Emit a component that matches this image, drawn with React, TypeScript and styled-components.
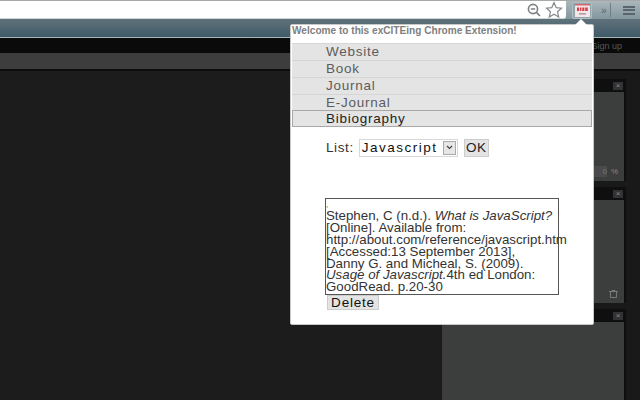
import React from "react";
import styled, { createGlobalStyle } from "styled-components";

const GlobalStyle = createGlobalStyle`
  html, body {
    margin: 0;
    padding: 0;
    background: #1c1c1c;
  }
`;

const tabs = ["Website", "Book", "Journal", "E-Journal", "Bibiography"];

const App = () => {
  return (
    <>
      <GlobalStyle />
      <Page>
        <TopBar>
          <AddressBar>
            <svg width="16" height="16" viewBox="0 0 16 16" fill="none" stroke="#7b8183" strokeWidth="1.6">
              <circle cx="7" cy="7" r="4.6" />
              <path d="M4.8 7h4.4M10.4 10.4l3.6 3.6" />
            </svg>
            <svg width="18" height="18" viewBox="0 0 18 18" fill="#fff" stroke="#858b8d" strokeWidth="1.2">
              <path d="M9 1.6l2.2 5 5.3.5-4 3.6 1.2 5.4L9 13.3l-4.7 2.8 1.2-5.4-4-3.6 5.3-.5z" />
            </svg>
          </AddressBar>
          <Tools>
            <ExtensionButton>
              <svg width="15" height="13" viewBox="0 0 15 13">
                <rect x="0" y="0" width="15" height="13" fill="#f4e6e8" />
                <rect x="0" y="0" width="15" height="1.5" fill="#d9646c" />
                <path d="M2 3.5h2.2v3.5H2zM5 3.5h1.4v3.5H5zM7.2 3.5h2.2v3.5H7.2zM10.2 3.5h2.6v3.5h-2.6z" fill="#d3414b" />
                <rect x="4" y="9" width="7" height="1.6" fill="#a9a0a2" />
              </svg>
            </ExtensionButton>
            <Chevron>»</Chevron>
            <Divider />
            <Burger>
              <span />
              <span />
              <span />
            </Burger>
          </Tools>
        </TopBar>
        <ThemeBar />
        <BlackBar>
          <SignUp>Sign up</SignUp>
        </BlackBar>
        <GreyBar />
        <Workspace>
          <SideColumn>
            <Panel $height={102}>
              <PanelHeader>
                <CloseBox>×</CloseBox>
              </PanelHeader>
              <PanelBody>
                <PanelFoot>
                  <SmallInput>0</SmallInput>
                  <Percent>%</Percent>
                </PanelFoot>
              </PanelBody>
            </Panel>
            <Panel $height={116}>
              <PanelHeader>
                <CloseBox>×</CloseBox>
              </PanelHeader>
              <PanelBody>
                <PanelFoot>
                  <svg width="9" height="8" viewBox="0 0 9 8" fill="none" stroke="#77797a">
                    <path d="M1.5 1.5h6v6h-6zM0 1.5h9M3 1.5V.5h3v1" />
                  </svg>
                </PanelFoot>
              </PanelBody>
            </Panel>
            <Panel $height={91}>
              <PanelHeader>
                <CloseBox>×</CloseBox>
              </PanelHeader>
              <PanelBody />
            </Panel>
          </SideColumn>
        </Workspace>

        <Popup>
          <Notch />
          <Welcome>Welcome to this exCITEing Chrome Extension!</Welcome>
          <TabList>
            {tabs.map((tab) => (
              <Tab key={tab} $active={tab === "Bibiography"}>
                {tab}
              </Tab>
            ))}
          </TabList>
          <TabContent>
            <ListRow>
              <span>List:</span>
              <SelectBox>
                Javascript
                <SelectArrow>
                  <svg width="7" height="5" viewBox="0 0 7 5" fill="none" stroke="#444" strokeWidth="1.2">
                    <path d="M1 1l2.5 2.5L6 1" />
                  </svg>
                </SelectArrow>
              </SelectBox>
              <PlainButton>OK</PlainButton>
            </ListRow>
            <Biblio>
              <Comma>,</Comma>
              <Line>
                Stephen, C (n.d.). <em>What is JavaScript?</em>
              </Line>
              <Line>[Online]. Available from:</Line>
              <Line>http://about.com/reference/javascript.htm</Line>
              <Line>[Accessed:13 September 2013],</Line>
              <Line>Danny G. and Micheal, S. (2009).</Line>
              <Line>
                <em>Usage of Javascript.</em>4th ed London:
              </Line>
              <Line>GoodRead. p.20-30</Line>
            </Biblio>
            <DeleteButton>Delete</DeleteButton>
          </TabContent>
        </Popup>
      </Page>
    </>
  );
};

export default App;

const Page = styled.div`
  position: relative;
  width: 640px;
  height: 400px;
  overflow: hidden;
  display: flex;
  flex-direction: column;
  background: #1c1c1c;
  font-family: "Liberation Sans", Arial, sans-serif;
`;

const TopBar = styled.div`
  display: flex;
  flex-shrink: 0;
  height: 19px;
  background: linear-gradient(#aab7bb, #82969e);
  border-top: 1px solid #a8a8a8;
  box-sizing: border-box;
`;

const AddressBar = styled.div`
  width: 566px;
  display: flex;
  align-items: center;
  justify-content: flex-end;
  gap: 3px;
  padding-right: 3px;
  box-sizing: border-box;
  background: #fff;
  border-bottom: 1px solid #cfd6d8;
  border-radius: 0 0 3px 0;
`;

const Tools = styled.div`
  flex: 1;
  display: flex;
  align-items: center;
  padding-left: 6px;
`;

const ExtensionButton = styled.div`
  width: 20px;
  height: 17px;
  display: flex;
  align-items: center;
  justify-content: center;
  background: #93a5ac;
  border: 1px solid #b2bfc3;
  box-sizing: border-box;
  border-radius: 2px;
`;

const Chevron = styled.span`
  margin-left: 9px;
  font-size: 10px;
  color: #59656a;
`;

const Divider = styled.div`
  width: 1px;
  height: 14px;
  margin-left: 3px;
  background: #6f7f85;
`;

const Burger = styled.div`
  margin-left: 12px;
  width: 12px;
  display: flex;
  flex-direction: column;
  gap: 1.5px;

  span {
    height: 2px;
    background: #59656a;
  }
`;

const ThemeBar = styled.div`
  flex-shrink: 0;
  height: 19px;
  box-sizing: border-box;
  background: linear-gradient(#5f727b, #3f5a68);
  border-bottom: 1px solid #a9b7bb;
`;

const BlackBar = styled.div`
  flex-shrink: 0;
  height: 15px;
  display: flex;
  justify-content: flex-end;
  align-items: center;
  padding-right: 18px;
  background: #0a0a0a;
`;

const SignUp = styled.span`
  font-size: 9px;
  color: #55595a;
`;

const GreyBar = styled.div`
  flex-shrink: 0;
  height: 18px;
  box-sizing: border-box;
  background: #3d3d3d;
  border-bottom: 2px solid #0c0c0c;
`;

const Workspace = styled.div`
  flex: 1;
  min-height: 0;
  display: flex;
  justify-content: flex-end;
  background: #1c1c1c;
`;

const SideColumn = styled.div`
  width: 199px;
  padding: 8px 14px 0 1px;
  box-sizing: border-box;
  display: flex;
  flex-direction: column;
  gap: 6px;
  background: #191919;
`;

const Panel = styled.div<{ $height: number }>`
  height: ${({ $height }) => $height}px;
  flex-shrink: 0;
  display: flex;
  flex-direction: column;
  background: #0f0f0f;
  padding-right: 2px;
`;

const PanelHeader = styled.div`
  height: 13px;
  display: flex;
  justify-content: flex-end;
  padding: 0 1px;
  align-items: center;
`;

const CloseBox = styled.div`
  width: 10px;
  height: 8px;
  line-height: 8px;
  text-align: center;
  font-size: 8px;
  color: #8a8a8a;
  background: #333;
`;

const PanelBody = styled.div`
  flex: 1;
  display: flex;
  flex-direction: column;
  justify-content: flex-end;
  background: #3c3d3d;
`;

const PanelFoot = styled.div`
  display: flex;
  justify-content: flex-end;
  align-items: center;
  gap: 4px;
  padding: 0 6px 4px 0;
  min-height: 11px;
`;

const SmallInput = styled.div`
  width: 17px;
  height: 11px;
  font-size: 8px;
  line-height: 11px;
  text-align: right;
  color: #777;
  background: #4a4a4a;
`;

const Percent = styled.span`
  font-size: 8px;
  color: #888;
`;

const Popup = styled.div`
  position: absolute;
  left: 290px;
  top: 24px;
  width: 304px;
  height: 301px;
  box-sizing: border-box;
  background: #fff;
  border: 1px solid #c8c8c8;
  border-radius: 2px;
  padding: 0 1px;
`;

const Notch = styled.div`
  position: absolute;
  top: -6px;
  right: 6px;
  width: 0;
  height: 0;
  border-left: 6px solid transparent;
  border-right: 6px solid transparent;
  border-bottom: 6px solid #fff;
`;

const Welcome = styled.div`
  height: 18.2px;
  line-height: 12px;
  font-size: 10.1px;
  font-weight: bold;
  color: #808080;
  white-space: nowrap;
`;

const TabList = styled.div`
  display: flex;
  flex-direction: column;
`;

const Tab = styled.div<{ $active: boolean }>`
  height: 16.8px;
  line-height: 16px;
  box-sizing: border-box;
  padding-left: ${({ $active }) => ($active ? "33px" : "34px")};
  font-size: 13.5px;
  letter-spacing: 0.75px;
  background: #e4e4e4;
  color: ${({ $active }) => ($active ? "#222" : "#5c5c5c")};
  border: 1px solid ${({ $active }) => ($active ? "#a8a8a8" : "#d6d6d6")};
  border-width: ${({ $active }) => ($active ? "1px" : "1px 0 0 0")};
`;

const TabContent = styled.div`
  padding: 11.8px 0 0 34px;
`;

const ListRow = styled.div`
  display: flex;
  align-items: center;
  height: 18px;
  gap: 5px;
  font-size: 13.5px;
  letter-spacing: 0.6px;
  color: #333;
`;

const SelectBox = styled.div`
  width: 99px;
  height: 18px;
  box-sizing: border-box;
  display: flex;
  align-items: center;
  justify-content: space-between;
  padding: 0 1px 0 2px;
  font-size: 13.5px;
  letter-spacing: 1.5px;
  color: #111;
  border: 1px solid #d8d8d8;
`;

const SelectArrow = styled.div`
  width: 13px;
  height: 14px;
  display: flex;
  align-items: center;
  justify-content: center;
  background: #e6e6e6;
  border: 1px solid #aaa;
  box-sizing: border-box;
`;

const PlainButton = styled.div`
  margin-left: 1px;
  width: 23px;
  height: 16px;
  line-height: 16px;
  text-align: center;
  background: #e4e4e4;
  border: 1px solid #ccc;
  font-size: 13.5px;
  letter-spacing: 0.6px;
  color: #222;
`;

const Biblio = styled.div`
  margin: 41px 0 0 -1px;
  width: 234px;
  height: 97px;
  box-sizing: border-box;
  border: 1px solid #555;
  font-size: 13.3px;
  line-height: 11.8px;
  color: #333;
  white-space: nowrap;
`;

const Comma = styled.div`
  height: 11.5px;
  line-height: 12px;
  font-size: 8px;
  color: #555;
`;

const Line = styled.div`
  height: 11.8px;
`;

const DeleteButton = styled.div`
  margin: 0 0 0 1px;
  width: 52px;
  height: 15px;
  line-height: 13px;
  text-align: center;
  background: #e4e4e4;
  border: 1px solid #ccc;
  box-sizing: border-box;
  font-size: 13.5px;
  letter-spacing: 0.8px;
  color: #111;
`;
